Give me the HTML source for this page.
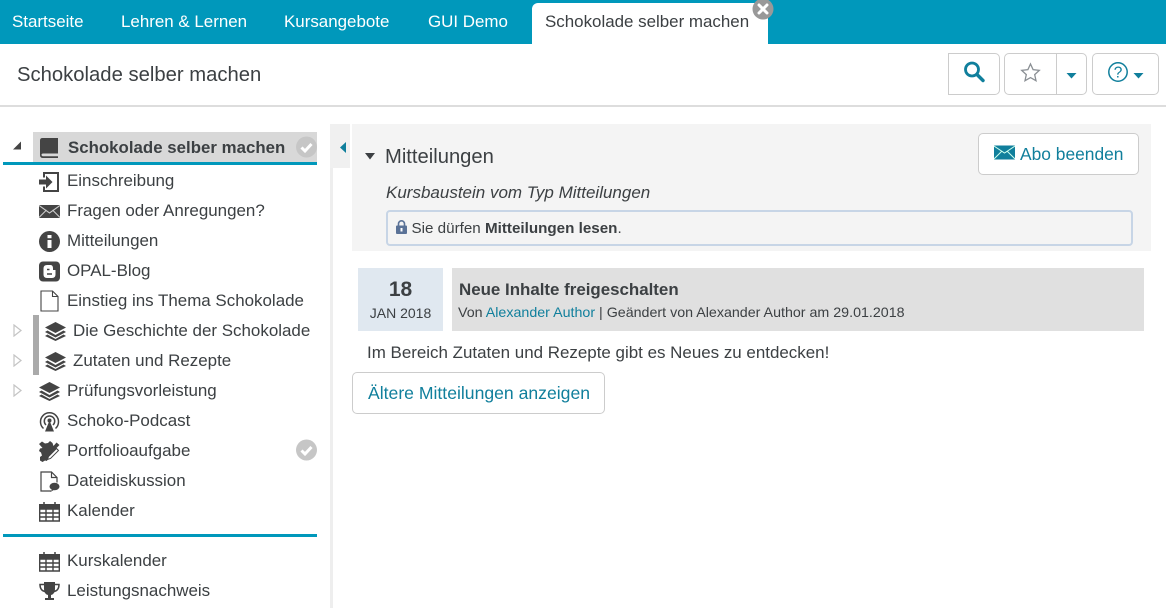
<!DOCTYPE html>
<html lang="de"><head><meta charset="utf-8"><title>Schokolade selber machen</title>
<style>
html,body{margin:0;padding:0;background:#fff}
#p{position:relative;width:1166px;height:608px;overflow:hidden;font-family:"Liberation Sans",sans-serif;color:#3c4043;background:#fff}
#p div,#p span.a,#p svg{position:absolute}
.t{white-space:nowrap;line-height:20px;height:20px}
.n{color:#fff;font-size:16.930px;top:12px}
.s{font-size:16.950px;left:67px}
.btn{border:1px solid #ccc;background:#fff;box-sizing:border-box}
.l{color:#107f9c}
</style></head><body><div id="p">
<div style="left:0;top:0;width:1166px;height:44px;background:#0098bb"></div>
<div class="t n" style="left:12px">Startseite</div>
<div class="t n" style="left:121px">Lehren &amp; Lernen</div>
<div class="t n" style="left:284px">Kursangebote</div>
<div class="t n" style="left:428px">GUI Demo</div>
<div style="left:532px;top:3px;width:236px;height:41px;background:#fff;border-radius:6px 6px 0 0"></div>
<div class="t n" style="left:545px;color:#3c4043">Schokolade selber machen</div>
<svg style="left:752px;top:-2px" width="22" height="22" viewBox="0 0 22 22"><circle cx="11" cy="11" r="10.5" fill="#999"/><path d="M7 7l8 8M15 7l-8 8" stroke="#fff" stroke-width="3" stroke-linecap="round"/></svg>

<div class="t" style="left:17px;top:65px;font-size:20.250px">Schokolade selber machen</div>
<div style="left:0;top:105px;width:1166px;height:2px;background:#ddd"></div>

<div class="btn" style="left:948px;top:53px;width:52px;height:42px;border-radius:0 5px 5px 0"></div>
<svg style="left:962px;top:60px" width="24" height="24" viewBox="0 0 24 24"><circle cx="10" cy="9.500" r="6.500" fill="none" stroke="#107f9c" stroke-width="2.800"/><path d="M15 14.500l6 6" stroke="#107f9c" stroke-width="3.400" stroke-linecap="round"/></svg>
<div class="btn" style="left:1004px;top:53px;width:53px;height:42px;border-radius:5px 0 0 5px"></div>
<div class="btn" style="left:1056px;top:53px;width:31px;height:42px;border-radius:0 5px 5px 0"></div>
<svg style="left:1020px;top:62px" width="21" height="21" viewBox="0 0 21 21"><path d="M10.500 2l2.600 5.700 6.200.7-4.600 4.200 1.300 6.100-5.500-3.100-5.500 3.100 1.300-6.100L1.700 8.400l6.200-.7z" fill="none" stroke="#8a8f94" stroke-width="1.300"/></svg>
<svg style="left:1066px;top:73px" width="11" height="6" viewBox="0 0 11 6"><path d="M0.500 0h10l-5 5.500z" fill="#107f9c"/></svg>
<div class="btn" style="left:1092px;top:53px;width:67px;height:42px;border-radius:5px"></div>
<svg style="left:1108px;top:62px" width="20" height="20" viewBox="0 0 20 20"><circle cx="10" cy="10" r="9.200" fill="none" stroke="#107f9c" stroke-width="1.500"/><text x="10" y="15.500" font-size="15.500" text-anchor="middle" fill="#107f9c" font-family="Liberation Sans">?</text></svg>
<svg style="left:1133px;top:73px" width="11" height="6" viewBox="0 0 11 6"><path d="M0.500 0h10l-5 5.500z" fill="#107f9c"/></svg>

<!-- Sidebar -->
<svg style="left:12px;top:141px" width="10" height="10" viewBox="0 0 10 10"><path d="M1 8.500h8v-8z" fill="#444"/></svg>
<div style="left:33px;top:132px;width:284px;height:30px;background:#d8d8d8"></div>
<div style="left:3px;top:162px;width:314px;height:3px;background:#0098bb"></div>
<svg style="left:40px;top:138px" width="18" height="20" viewBox="0 0 18 20"><path d="M0 2.500Q0 0 2.500 0H18v15.500H3Q1.500 15.500 1.500 16.800T3 18.300H18V20H3Q0 20 0 17z" fill="#444"/></svg>
<div class="t" style="left:68px;top:138px;font-size:16.800px;font-weight:bold;letter-spacing:.04px">Schokolade selber machen</div>
<svg style="left:296px;top:136px" width="21" height="22" viewBox="0 0 21 22"><circle cx="10.500" cy="11" r="10.500" fill="#c6c6c6"/><path d="M5.500 11.500l3.500 3.500 6.500-7" fill="none" stroke="#fff" stroke-width="3"/></svg>

<svg style="left:39px;top:172px" width="20" height="20" viewBox="0 0 20 20"><path d="M5 5.500V1h14v18H5v-4.500" fill="none" stroke="#444" stroke-width="2"/><path d="M0 7.500h7V3.500l6.500 6.500L7 16.500v-4H0z" fill="#444"/></svg>
<div class="t s" style="top:171px">Einschreibung</div>
<svg style="left:39px;top:205px" width="21" height="13" viewBox="0 0 21 13"><rect width="21" height="13" fill="#444"/><path d="M0 .5l10.500 7.500L21 .5M0 12.500l7.500-7.500M21 12.500l-7.500-7.500" fill="none" stroke="#ccc" stroke-width="1.100"/></svg>
<div class="t s" style="top:201px">Fragen oder Anregungen?</div>
<svg style="left:39px;top:231px" width="21" height="21" viewBox="0 0 21 21"><circle cx="10.500" cy="10.500" r="10.500" fill="#444"/><rect x="8.500" y="9" width="4" height="8" fill="#fff"/><rect x="8.500" y="4" width="4" height="3.200" fill="#fff"/></svg>
<div class="t s" style="top:231px">Mitteilungen</div>
<svg style="left:39px;top:261px" width="21" height="21" viewBox="0 0 21 21"><rect width="21" height="20" y=".5" rx="4" fill="#444"/><path d="M4.500 7.500Q4.500 4 8 4h3.500Q14 4 14 7.500V9h2.500v4.500Q16.500 17 13 17H8Q4.500 17 4.500 13.500z" fill="#fff"/><path d="M8 8.500h2.500M8 13h5" stroke="#444" stroke-width="1.600"/></svg>
<div class="t s" style="top:261px">OPAL-Blog</div>
<svg style="left:40px;top:290px" width="19" height="22" viewBox="0 0 19 22"><path d="M1 1h11.500L18 6.500V21H1zM12.500 1v5.500H18" fill="#fff" stroke="#444" stroke-width="1.100"/></svg>
<div class="t s" style="top:291px">Einstieg ins Thema Schokolade</div>

<svg style="left:13px;top:324px" width="9" height="13" viewBox="0 0 9 13"><path d="M1 1l7 5.500-7 5.500z" fill="#fff" stroke="#c4c4c4" stroke-width="1.200"/></svg>
<svg style="left:13px;top:354px" width="9" height="13" viewBox="0 0 9 13"><path d="M1 1l7 5.500-7 5.500z" fill="#fff" stroke="#c4c4c4" stroke-width="1.200"/></svg>
<svg style="left:13px;top:384px" width="9" height="13" viewBox="0 0 9 13"><path d="M1 1l7 5.500-7 5.500z" fill="#fff" stroke="#c4c4c4" stroke-width="1.200"/></svg>
<div style="left:33px;top:315px;width:6px;height:60px;background:#aaa"></div>
<svg style="left:45px;top:321px" width="21" height="20" viewBox="0 0 21 20"><path d="M10.500 1L21 6.500 10.500 12 0 6.500z" fill="#444"/><path d="M2.500 9.500L10.500 14l8-4.500 2.500 1.500-10.500 5.500L0 11zM2.500 13.500L10.500 18l8-4.500 2.500 1.500-10.500 5L0 15z" fill="#444"/></svg>
<div class="t s" style="left:73px;top:321px">Die Geschichte der Schokolade</div>
<svg style="left:45px;top:351px" width="21" height="20" viewBox="0 0 21 20"><path d="M10.500 1L21 6.500 10.500 12 0 6.500z" fill="#444"/><path d="M2.500 9.500L10.500 14l8-4.500 2.500 1.500-10.500 5.500L0 11zM2.500 13.500L10.500 18l8-4.500 2.500 1.500-10.500 5L0 15z" fill="#444"/></svg>
<div class="t s" style="left:73px;top:351px">Zutaten und Rezepte</div>
<svg style="left:39px;top:381px" width="21" height="20" viewBox="0 0 21 20"><path d="M10.500 1L21 6.500 10.500 12 0 6.500z" fill="#444"/><path d="M2.500 9.500L10.500 14l8-4.500 2.500 1.500-10.500 5.500L0 11zM2.500 13.500L10.500 18l8-4.500 2.500 1.500-10.500 5L0 15z" fill="#444"/></svg>
<div class="t s" style="top:381px">Prüfungsvorleistung</div>

<svg style="left:39px;top:411px" width="21" height="21" viewBox="0 0 21 21"><path d="M4.500 17.500a9 9 0 1 1 12 0M7 14a5.200 5.200 0 1 1 7 0" fill="none" stroke="#444" stroke-width="1.500"/><circle cx="10.500" cy="9.500" r="2" fill="#444"/><path d="M10.500 9.500L15 20.500H6z" fill="#444"/></svg>
<div class="t s" style="top:411px">Schoko-Podcast</div>
<svg style="left:39px;top:441px" width="21" height="21" viewBox="0 0 21 21"><path d="M0 3l3-2.500L6 2.500 9 2l2-2 2.500 2 1 3 3-3.500 3 2.500-3 3-5 5-1.500 3.500-2 1.500L8 20l-2-.5L3.500 21 1 19.500V16l2-1.500-1-3L0 10l1-2.500 2.500-.5z" fill="#444"/><path d="M9.500 15.500L17.500 7.500 19.500 9.500 11.500 17.500 8.500 18.500z" fill="#fff" stroke="#444" stroke-width="1"/></svg>
<div class="t s" style="top:441px">Portfolioaufgabe</div>
<svg style="left:296px;top:439px" width="21" height="22" viewBox="0 0 21 22"><circle cx="10.500" cy="11" r="10.500" fill="#c6c6c6"/><path d="M5.500 11.500l3.500 3.500 6.500-7" fill="none" stroke="#fff" stroke-width="3"/></svg>
<svg style="left:40px;top:471px" width="20" height="21" viewBox="0 0 20 21"><path d="M11 20H1V1h10.500L17 6.500v5M11.500 1v5.500H17" fill="none" stroke="#444" stroke-width="1.200"/><ellipse cx="14.500" cy="15.500" rx="5" ry="3.800" fill="#444"/><path d="M10.500 21l2-3.500 2 1z" fill="#444"/></svg>
<div class="t s" style="top:471px">Dateidiskussion</div>
<svg style="left:39px;top:501px" width="21" height="21" viewBox="0 0 21 21"><path d="M0 3h21v5H0z" fill="#444"/><path d="M5 1v4M16 1v4" stroke="#444" stroke-width="1.500"/><path d="M.7 8h19.600v12H.7zM.7 12h19.600M.7 16h19.600M7 8v12M14 8v12" fill="none" stroke="#444" stroke-width="1.400"/></svg>
<div class="t s" style="top:501px">Kalender</div>
<div style="left:3px;top:534px;width:314px;height:3px;background:#0098bb"></div>
<svg style="left:39px;top:551px" width="21" height="21" viewBox="0 0 21 21"><path d="M0 3h21v5H0z" fill="#444"/><path d="M5 1v4M16 1v4" stroke="#444" stroke-width="1.500"/><path d="M.7 8h19.600v12H.7zM.7 12h19.600M.7 16h19.600M7 8v12M14 8v12" fill="none" stroke="#444" stroke-width="1.400"/></svg>
<div class="t s" style="top:551px">Kurskalender</div>
<svg style="left:39px;top:582px" width="21" height="19" viewBox="0 0 21 19"><path d="M5 0h11v7q0 5-4 6v3h3v2H6v-2h3v-3Q5 12 5 7z" fill="#444"/><path d="M5 2.500H1q0 6 5 7M16 2.500h4q0 6-5 7" fill="none" stroke="#444" stroke-width="1.500"/></svg>
<div class="t s" style="top:581px">Leistungsnachweis</div>

<div style="left:330px;top:124px;width:3px;height:484px;background:#eee"></div>
<div style="left:330px;top:124px;width:20px;height:44px;background:#f0f0f0"></div>
<svg style="left:340px;top:141px" width="7" height="13" viewBox="0 0 7 13"><path d="M6 1v11L0 6.500z" fill="#107f9c"/></svg>

<!-- Content -->
<div style="left:352px;top:124px;width:799px;height:127px;background:#f4f4f4"></div>
<svg style="left:365px;top:153px" width="10" height="7" viewBox="0 0 10 7"><path d="M0 0h10L5 6.500z" fill="#3c4043"/></svg>
<div class="t" style="left:385px;top:147px;font-size:20.200px">Mitteilungen</div>
<div class="btn" style="left:978px;top:133px;width:161px;height:42px;border-radius:5px"></div>
<svg style="left:994px;top:145px" width="21" height="15" viewBox="0 0 21 15"><rect width="21" height="14" y=".5" fill="#107f9c"/><path d="M0 1l10.500 7L21 1M0 14l7.500-7.500M21 14l-7.500-7.500" fill="none" stroke="#cfe" stroke-width="1"/></svg>
<div class="t l" style="left:1020px;top:144px;font-size:17.400px">Abo beenden</div>
<div class="t" style="left:386px;top:183px;font-size:17px;font-style:italic">Kursbaustein vom Typ Mitteilungen</div>
<div style="left:386px;top:210px;width:747px;height:36px;box-sizing:border-box;border:2px solid #c7d5e6;border-radius:4px"></div>
<svg style="left:396px;top:220px" width="11" height="14" viewBox="0 0 11 14"><path d="M2.500 6V3.800a3 3 0 0 1 6 0V6" fill="none" stroke="#5a7297" stroke-width="1.600"/><rect y="5.500" width="11" height="8.500" rx="1" fill="#5a7297"/><rect x="4.500" y="8" width="2" height="3.500" fill="#fff"/></svg>
<div class="t" style="left:411.500px;top:219px;font-size:15.200px">Sie dürfen <b>Mitteilungen lesen</b>.</div>

<div style="left:358px;top:268px;width:85px;height:63px;background:#e0e8f0"></div>
<div class="t" style="left:358px;width:85px;text-align:center;top:280px;font-size:21px;font-weight:bold;line-height:20px">18</div>
<div class="t" style="left:358px;width:85px;text-align:center;top:303px;font-size:14px">JAN 2018</div>
<div style="left:452px;top:268px;width:692px;height:63px;background:#e0e0e0"></div>
<div class="t" style="left:459px;top:280px;font-size:16.900px;font-weight:bold">Neue Inhalte freigeschalten</div>
<div class="t" style="left:458px;top:303px;font-size:14.250px">Von <span class="l">Alexander Author</span> | Geändert von Alexander Author am 29.01.2018</div>
<div class="t" style="left:367px;top:343px;font-size:16.950px">Im Bereich Zutaten und Rezepte gibt es Neues zu entdecken!</div>
<div class="btn" style="left:352px;top:372px;width:253px;height:42px;border-radius:5px"></div>
<div class="t l" style="left:368px;top:383px;font-size:17.600px">Ältere Mitteilungen anzeigen</div>
</div></body></html>
